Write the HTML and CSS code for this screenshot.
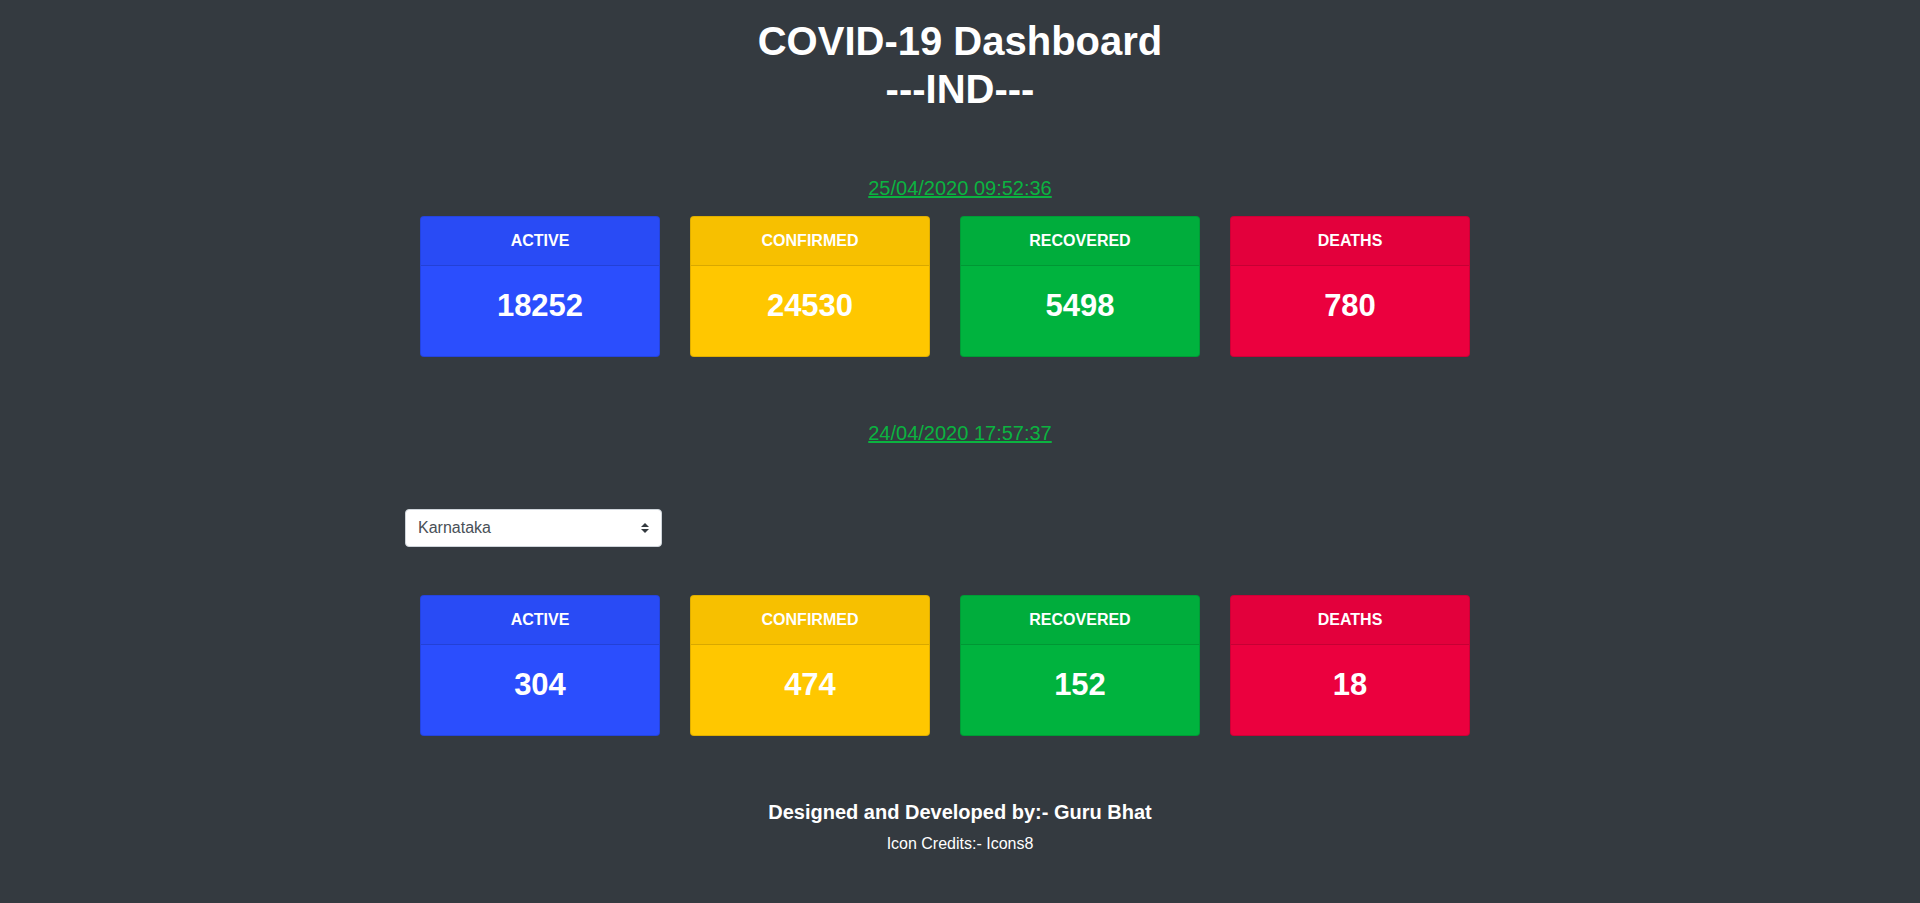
FILE: index.html
```html
<!DOCTYPE html>
<html lang="en">
<head>
<meta charset="utf-8">
<title>COVID-19 Dashboard</title>
<link rel="stylesheet" href="styles.css">
</head>
<body>
<div class="container">
  <h1 class="title">COVID-19 Dashboard<br>---IND---</h1>

  <div class="stamp stamp-first"><a href="#">25/04/2020 09:52:36</a></div>
  <div class="cards cards-first">
    <div class="card card-blue">
      <div class="card-header">ACTIVE</div>
      <div class="card-body"><h2 class="num">18252</h2></div>
    </div>
    <div class="card card-yellow">
      <div class="card-header">CONFIRMED</div>
      <div class="card-body"><h2 class="num">24530</h2></div>
    </div>
    <div class="card card-green">
      <div class="card-header">RECOVERED</div>
      <div class="card-body"><h2 class="num">5498</h2></div>
    </div>
    <div class="card card-red">
      <div class="card-header">DEATHS</div>
      <div class="card-body"><h2 class="num">780</h2></div>
    </div>
  </div>

  <div class="stamp stamp-second"><a href="#">24/04/2020 17:57:37</a></div>

  <div class="select-wrap">
    <select class="state-select">
      <option>Karnataka</option>
    </select>
    <svg class="select-arrows" width="8" height="10" viewBox="0 0 4 5"><path d="M2 0L0 2h4zm0 5L0 3h4z" fill="#343a40"/></svg>
  </div>

  <div class="cards cards-second">
    <div class="card card-blue">
      <div class="card-header">ACTIVE</div>
      <div class="card-body"><h2 class="num">304</h2></div>
    </div>
    <div class="card card-yellow">
      <div class="card-header">CONFIRMED</div>
      <div class="card-body"><h2 class="num">474</h2></div>
    </div>
    <div class="card card-green">
      <div class="card-header">RECOVERED</div>
      <div class="card-body"><h2 class="num">152</h2></div>
    </div>
    <div class="card card-red">
      <div class="card-header">DEATHS</div>
      <div class="card-body"><h2 class="num">18</h2></div>
    </div>
  </div>

  <footer class="footer">
    <h5 class="credit-main">Designed and Developed by:- Guru Bhat</h5>
    <p class="credit-sub">Icon Credits:- Icons8</p>
  </footer>
</div>
</body>
</html>
```
FILE: styles.css
```css
* { box-sizing: border-box; }

html, body {
  margin: 0;
  padding: 0;
  background: #343a40;
  min-height: 100%;
}

body {
  font-family: "Liberation Sans", Arial, sans-serif;
  color: #fff;
  font-size: 16px;
  line-height: 1.5;
}

.container {
  width: 1110px;
  margin: 0 auto;
  padding-top: 17px;
  padding-bottom: 40px;
}

.title {
  margin: 0;
  font-size: 40px;
  line-height: 48px;
  font-weight: 700;
  text-align: center;
}

.stamp {
  text-align: center;
  font-size: 20px;
  line-height: 30px;
}

.stamp a {
  color: #0bb340;
  text-decoration: underline;
}

.stamp-first { margin-top: 60px; }
.stamp-second { margin-top: 61px; }

.cards {
  display: flex;
  gap: 30px;
  padding: 0 15px;
}

.cards-first { margin-top: 13px; }
.cards-second { margin-top: 48px; }

.card {
  width: 240px;
  height: 141px;
  border: 1px solid rgba(0, 0, 0, 0.125);
  border-radius: 4px;
  overflow: hidden;
  display: flex;
  flex-direction: column;
}

.card-header {
  height: 49px;
  padding: 12px 20px 11px;
  line-height: 24px;
  font-size: 16px;
  font-weight: 700;
  text-align: center;
  background: rgba(0, 0, 0, 0.03);
  border-bottom: 1px solid rgba(0, 0, 0, 0.125);
}

.card-body {
  flex: 1;
  padding: 21px 20px 0;
  text-align: center;
}

.num {
  margin: 0;
  font-size: 31px;
  line-height: 37px;
  font-weight: 700;
}

.card-blue { background: #2b4efd; }
.card-yellow { background: #ffc700; }
.card-green { background: #00b33e; }
.card-red { background: #eb003e; }

.select-wrap {
  position: relative;
  width: 257px;
  margin-top: 61px;
}

.state-select {
  display: block;
  width: 100%;
  height: 38px;
  padding: 6px 28px 6px 12px;
  font-family: "Liberation Sans", Arial, sans-serif;
  font-size: 16px;
  line-height: 24px;
  color: #495057;
  background: #fff;
  border: 1px solid #ced4da;
  border-radius: 4px;
  -webkit-appearance: none;
  appearance: none;
  outline: none;
}

.select-arrows {
  position: absolute;
  right: 13px;
  top: 14px;
  pointer-events: none;
}

.footer {
  margin-top: 64px;
  text-align: center;
}

.credit-main {
  margin: 0 0 8px;
  font-size: 20px;
  line-height: 24px;
  font-weight: 700;
}

.credit-sub {
  margin: 0;
  font-size: 16px;
  line-height: 24px;
}
```
